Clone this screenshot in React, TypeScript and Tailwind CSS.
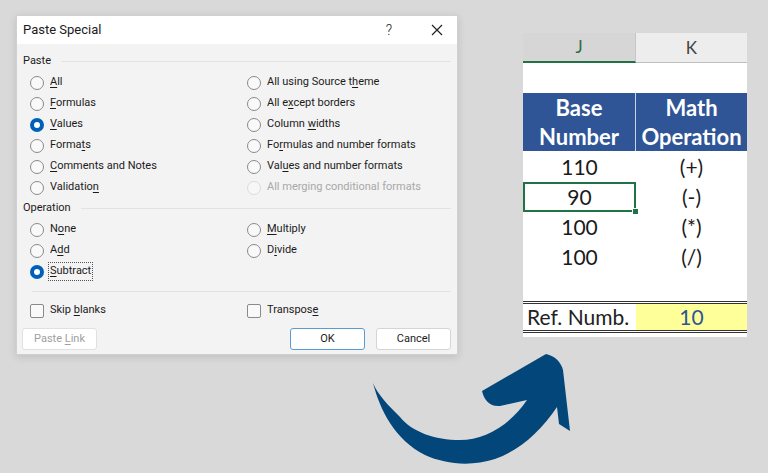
import React from "react";

const dlgFont = { fontFamily: 'Roboto, "Noto Sans", sans-serif' };
const xlFont = { fontFamily: 'Lato, "Open Sans", sans-serif' };

// label with one underlined access key
function Key({ text, k }: { text: string; k?: number }) {
  if (k === undefined) return <>{text}</>;
  return (
    <>
      {text.slice(0, k)}
      <span className="underline underline-offset-2">{text[k]}</span>
      {text.slice(k + 1)}
    </>
  );
}

function Radio({ label, k, checked, disabled, focus }: { label: string; k?: number; checked?: boolean; disabled?: boolean; focus?: boolean }) {
  return (
    <div className="flex items-center h-[21px]">
      {checked ? (
        <span className="w-[14px] h-[14px] rounded-full bg-[#005fb8] flex items-center justify-center">
          <span className="w-[6px] h-[6px] rounded-full bg-white" />
        </span>
      ) : (
        <span
          className={
            disabled
              ? "w-[14px] h-[14px] rounded-full border border-[#dcdcdc] bg-[#f7f7f7]"
              : "w-[14px] h-[14px] rounded-full border border-[#8a8a8a] bg-[#f9f9f9]"
          }
        />
      )}
      <span
        className={
          (disabled ? "text-[#a8a8a8] " : "text-[#1b1b1b] ") +
          (focus ? "ml-[5px] px-[1px] outline outline-1 outline-dotted outline-[#555]" : "ml-[6px]")
        }
      >
        <Key text={label} k={k} />
      </span>
    </div>
  );
}

function Check({ label, k }: { label: string; k: number }) {
  return (
    <div className="flex items-center h-[21px]">
      <span className="w-[14px] h-[14px] rounded-[2px] border border-[#8a8a8a] bg-[#f9f9f9]" />
      <span className="ml-[6px] text-[#1b1b1b]">
        <Key text={label} k={k} />
      </span>
    </div>
  );
}

function Group({ title }: { title: string }) {
  return (
    <div className="flex items-center h-[21px] pr-[6px]">
      <span className="text-[#1b1b1b]">{title}</span>
      <span className="flex-1 ml-[10px] border-t border-[#e2e2e2]" />
    </div>
  );
}

function Dialog() {
  return (
    <div
      className="w-[442px] h-[340px] bg-[#f3f3f3] border border-[#d0d0d0] shadow-[0_2px_8px_rgba(0,0,0,0.12)] text-[11px] flex flex-col"
      style={dlgFont}
    >
      <div className="h-[28px] bg-white flex items-center pl-[6px] pr-[14px] text-[13px] text-[#1b1b1b]">
        <span className="flex-1">Paste Special</span>
        <span className="mr-[39px] text-[14px] font-light">?</span>
        <svg width="12" height="12" viewBox="0 0 12 12">
          <path d="M1 1 L11 11 M11 1 L1 11" stroke="#222" strokeWidth="1.2" />
        </svg>
      </div>
      <div className="pl-[6px] pt-[7px] flex flex-col">
        <Group title="Paste" />
        <div className="pl-[7px] grid grid-cols-[217px_1fr]">
          <Radio label="All" k={0} />
          <Radio label="All using Source theme" k={18} />
          <Radio label="Formulas" k={0} />
          <Radio label="All except borders" k={5} />
          <Radio label="Values" k={0} checked />
          <Radio label="Column widths" k={7} />
          <Radio label="Formats" k={5} />
          <Radio label="Formulas and number formats" k={2} />
          <Radio label="Comments and Notes" k={0} />
          <Radio label="Values and number formats" k={3} />
          <Radio label="Validation" k={9} />
          <Radio label="All merging conditional formats" disabled />
        </div>
        <Group title="Operation" />
        <div className="pl-[7px] grid grid-cols-[217px_1fr]">
          <Radio label="None" k={1} />
          <Radio label="Multiply" k={0} />
          <Radio label="Add" k={1} />
          <Radio label="Divide" k={1} />
          <Radio label="Subtract" k={0} checked focus />
        </div>
        <div className="mt-[9px] ml-[9px] mr-[6px] border-t border-[#e2e2e2]" />
        <div className="mt-[8px] pl-[7px] grid grid-cols-[217px_1fr]">
          <Check label="Skip blanks" k={5} />
          <Check label="Transpose" k={8} />
        </div>
        <div className="mt-[7px] flex items-center pr-[6px]">
          <button className="-ml-[1px] w-[75px] h-[22px] rounded-[3px] bg-white border border-[#e0e0e0] text-[#a0a0a0]">
            Paste <span className="underline underline-offset-2">L</span>ink
          </button>
          <span className="flex-1" />
          <button className="w-[75px] h-[22px] rounded-[3px] bg-white border border-[#5b9bd5] text-[#1b1b1b]">
            OK
          </button>
          <button className="ml-[11px] w-[75px] h-[22px] rounded-[3px] bg-white border border-[#d5d5d5] text-[#1b1b1b]">
            Cancel
          </button>
        </div>
      </div>
    </div>
  );
}

function Sheet() {
  const rows = [
    ["110", "(+)"],
    ["90", "(-)"],
    ["100", "(*)"],
    ["100", "(/)"],
  ];
  return (
    <div className="w-[224px] h-[304px] bg-white flex flex-col text-[21px] text-[#1a1a1a]" style={xlFont}>
      <div className="flex h-[30px] text-[17px]">
        <div className="w-[113px] bg-[#d6d6d6] border-b-2 border-[#217346] border-r border-r-[#c6c6c6] flex items-center justify-center text-[#2f6b45]">
          J
        </div>
        <div className="w-[111px] bg-[#ededed] border-b border-[#bfbfbf] flex items-center justify-center text-[#444]">
          K
        </div>
      </div>
      <div className="h-[30px]" />
      <div className="flex h-[58px] text-white font-bold text-[22px] leading-[29px]">
        <div className="w-[113px] bg-[#2f5597] border-r border-[#c9d3e6] flex flex-col items-center justify-center">
          <span>Base</span>
          <span>Number</span>
        </div>
        <div className="w-[111px] bg-[#2f5597] flex flex-col items-center justify-center">
          <span>Math</span>
          <span>Operation</span>
        </div>
      </div>
      <div className="h-[1px]" />
      {rows.map(([a, b], i) => (
        <div key={i} className="flex h-[30px]">
          <div
            className={
              i === 1
                ? "relative w-[113px] border-2 border-[#217346] flex items-center justify-center"
                : "w-[113px] flex items-center justify-center"
            }
          >
            {a}
            {i === 1 && (
              <span className="absolute -right-[5px] -bottom-[5px] w-[7px] h-[7px] bg-[#217346] border border-white" />
            )}
          </div>
          <div className="w-[111px] flex items-center justify-center">{b}</div>
        </div>
      ))}
      <div className="h-[29px]" />
      <div className="flex h-[32px] border-y-[3px] border-double border-[#333]">
        <div className="w-[113px] flex items-center pl-[4px] text-[#222]">Ref. Numb.</div>
        <div className="w-[111px] bg-[#ffff99] flex items-center justify-center text-[#2f5597]">10</div>
      </div>
    </div>
  );
}

function Arrow() {
  return (
    <svg className="absolute left-0 top-0" width="768" height="473" viewBox="0 0 768 473">
      <path
        d="M373 383 C380 410 395 440 425 455 C445 464 470 467 495 459 C520 450 540 432 557 407 L559 424 L570 431 L563 370 C561 362 555 356 546 354 L482 391 C484 400 490 407 500 406 L527 400 C510 425 485 440 460 440 C435 440 412 432 400 417 C388 405 378 395 373 383 Z"
        fill="#03467a"
      />
    </svg>
  );
}

export default function App() {
  return (
    <div className="relative w-[768px] h-[473px] bg-[#d9d9d9] flex items-start overflow-hidden">
      <div className="ml-[16px] mt-[15px]">
        <Dialog />
      </div>
      <div className="ml-[65px] mt-[33px]">
        <Sheet />
      </div>
      <Arrow />
    </div>
  );
}
